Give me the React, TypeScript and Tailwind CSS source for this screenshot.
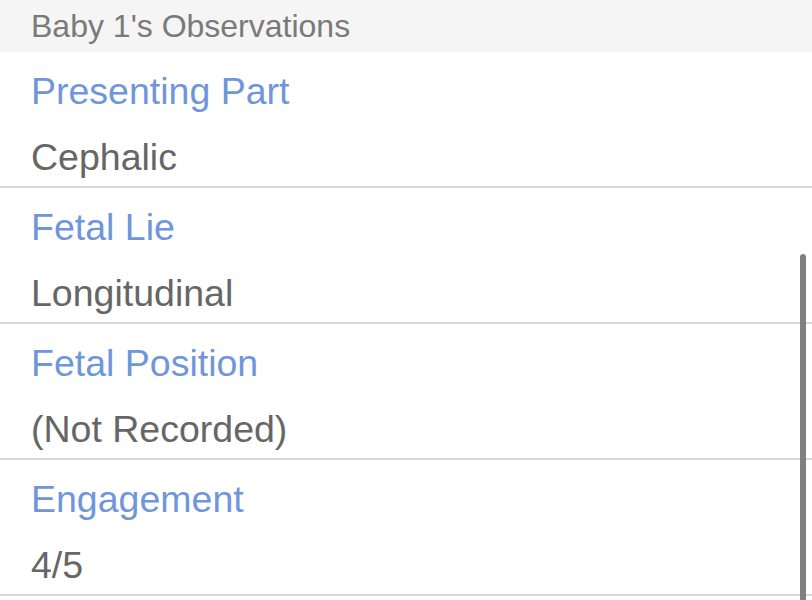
import React from "react";

const rows = [
  { label: "Presenting Part", value: "Cephalic" },
  { label: "Fetal Lie", value: "Longitudinal" },
  { label: "Fetal Position", value: "(Not Recorded)" },
  { label: "Engagement", value: "4/5" },
];

export default function App() {
  return (
    <div
      className="relative w-[812px] h-[600px] overflow-hidden bg-white"
      style={{ fontFamily: '"Liberation Sans", Arial, sans-serif' }}
    >
      <div className="h-[52px] bg-[#f5f5f5] flex items-center pl-[31px] text-[32px] leading-none text-[#7a7a7a]">
        Baby 1's Observations
      </div>
      {rows.map((r) => (
        <div
          key={r.label}
          className="h-[136px] border-b-2 border-[#d9d9d9] pl-[31px] pt-[18px] flex flex-col gap-[22px]"
        >
          <div className="h-[44px] flex items-center text-[37.5px] leading-none text-[#6f96da]">
            {r.label}
          </div>
          <div className="h-[44px] flex items-center text-[37.5px] leading-none text-[#666666]">
            {r.value}
          </div>
        </div>
      ))}
      <div className="absolute left-[800px] top-[254px] w-[6px] h-[360px] rounded-full bg-[#7f7f7f]" />
    </div>
  );
}
